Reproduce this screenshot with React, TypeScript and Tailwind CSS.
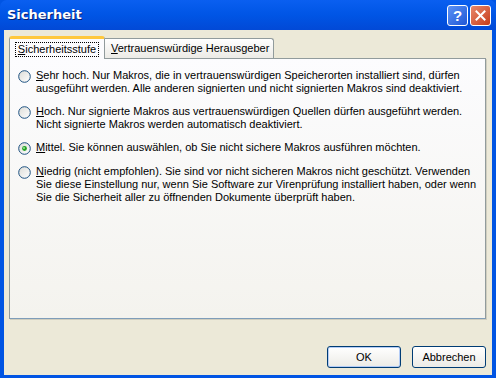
import React from "react";

const font = { fontFamily: "'Liberation Sans', Arial, sans-serif" };

function Radio({ checked }: { checked?: boolean }) {
  return (
    <svg width="13" height="13" viewBox="0 0 13 13" className="shrink-0">
      <defs>
        <linearGradient id="rg" x1="0" y1="0" x2="1" y2="1">
          <stop offset="0" stopColor="#DCDCD7" />
          <stop offset="1" stopColor="#FFFFFF" />
        </linearGradient>
      </defs>
      <circle cx="6.5" cy="6.5" r="5.8" fill="url(#rg)" stroke="#1C5180" strokeWidth="1" />
      {checked && (
        <>
          <circle cx="6.5" cy="6.5" r="2.4" fill="#21A121" />
          <circle cx="6" cy="6" r="1" fill="#9CE39C" />
        </>
      )}
    </svg>
  );
}

function Option({ checked, acc, rest, lines }: { checked?: boolean; acc: string; rest: string; lines: string[] }) {
  return (
    <div className="flex items-start gap-[5px]">
      <div className="pt-[1px]">
        <Radio checked={checked} />
      </div>
      <div className="text-[11px] leading-[13px] text-black whitespace-nowrap">
        <div>
          <span className="underline">{acc}</span>
          {rest}
        </div>
        {lines.map((l, i) => (
          <div key={i}>{l}</div>
        ))}
      </div>
    </div>
  );
}

export default function App() {
  return (
    <div className="w-[496px] h-[378px] flex flex-col overflow-hidden bg-[#0054E3]" style={font}>
      <div className="h-[30px] shrink-0 flex items-center justify-between pl-[7px] pr-[5px] bg-gradient-to-b from-[#0A5FF0] via-[#0055E5] to-[#0249D6] rounded-t-[7px]">
        <span className="text-white font-bold text-[13px]" style={{ fontFamily: "'DejaVu Sans', sans-serif", textShadow: "1px 1px #0A1E6E" }}>
          Sicherheit
        </span>
        <div className="flex gap-[2px]">
          <div className="w-[21px] h-[21px] rounded-[3px] border border-white bg-gradient-to-br from-[#5C92F5] to-[#1F56D6] flex items-center justify-center text-white font-bold text-[15px] leading-none">
            ?
          </div>
          <div className="w-[21px] h-[21px] rounded-[3px] border border-white bg-gradient-to-br from-[#E8876A] to-[#C63A12] flex items-center justify-center">
            <svg width="11" height="11" viewBox="0 0 11 11">
              <path d="M1.5 1.5 L9.5 9.5 M9.5 1.5 L1.5 9.5" stroke="white" strokeWidth="2" strokeLinecap="square" />
            </svg>
          </div>
        </div>
      </div>
      <div className="flex-1 flex flex-col bg-[#ECE9D8] ml-[4px] mr-[4px] mb-[3px] pt-[5px] pl-[5px] pr-[6px]">
        <div className="flex items-end h-[23px]">
          <div className="relative z-10 h-[23px] w-[96px] bg-[#FCFCFE] border-x border-[#919B9C] rounded-t-[3px] border-t-[3px] border-t-[#FFC83C] flex items-center justify-center mb-[-1px]">
            <span className="text-[11px] text-black outline outline-1 outline-dotted outline-black px-[2px] leading-[13px] whitespace-nowrap">
              <span className="underline">S</span>icherheitsstufe
            </span>
          </div>
          <div className="h-[20px] w-[169px] bg-gradient-to-b from-[#FFFFFF] to-[#ECEBE6] border-t border-r border-[#919B9C] rounded-tr-[3px] flex items-center pl-[6px]">
            <span className="text-[11px] text-black whitespace-nowrap">
              <span className="underline">V</span>ertrauenswürdige Herausgeber
            </span>
          </div>
        </div>
        <div className="h-[261px] border border-[#919B9C] border-b-[#7F9DB9] bg-gradient-to-b from-[#FCFCFE] to-[#F4F3EE] shadow-[1px_1px_0_#D0CEBF] pt-[10px] pl-[8px] flex flex-col gap-[10px]">
          <Option acc="S" rest="ehr hoch. Nur Makros, die in vertrauenswürdigen Speicherorten installiert sind, dürfen" lines={["ausgeführt werden. Alle anderen signierten und nicht signierten Makros sind deaktiviert."]} />
          <Option acc="H" rest="och. Nur signierte Makros aus vertrauenswürdigen Quellen dürfen ausgeführt werden." lines={["Nicht signierte Makros werden automatisch deaktiviert."]} />
          <Option checked acc="M" rest="ittel. Sie können auswählen, ob Sie nicht sichere Makros ausführen möchten." lines={[]} />
          <Option acc="N" rest="iedrig (nicht empfohlen). Sie sind vor nicht sicheren Makros nicht geschützt. Verwenden" lines={["Sie diese Einstellung nur, wenn Sie Software zur Virenprüfung installiert haben, oder wenn", "Sie die Sicherheit aller zu öffnenden Dokumente überprüft haben."]} />
        </div>
        <div className="flex justify-end gap-[11px] mt-[27px] pr-[0px]">
          <button className="w-[74px] h-[22px] rounded-[3px] border border-[#003C74] bg-gradient-to-b from-[#FFFFFF] to-[#ECEBE6] text-[11px] text-black shadow-[inset_0_0_0_1px_#B5CDF6]">
            OK
          </button>
          <button className="w-[74px] h-[22px] rounded-[3px] border border-[#003C74] bg-gradient-to-b from-[#FFFFFF] to-[#ECEBE6] text-[11px] text-black">
            Abbrechen
          </button>
        </div>
      </div>
    </div>
  );
}
